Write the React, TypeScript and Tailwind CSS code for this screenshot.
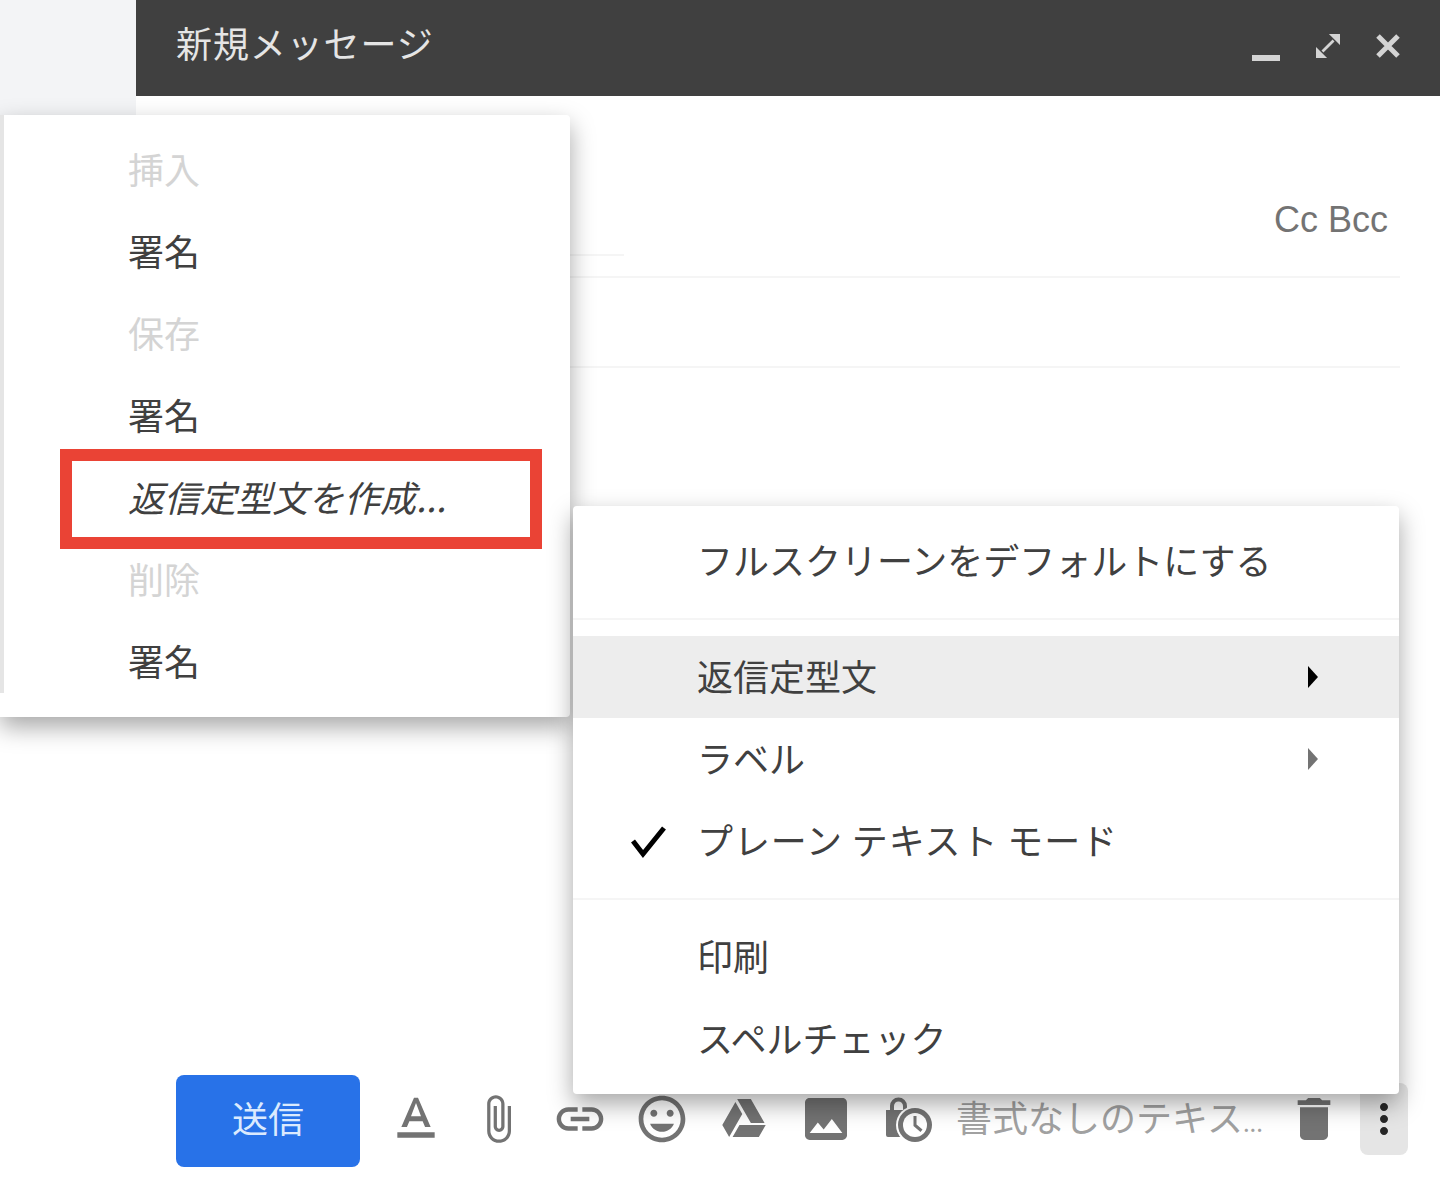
const toolIcons = [
  "M5 17v2h14v-2H5zm4.5-4.2h5l.9 2.2h2.1L12.75 4h-1.5L6.5 15h2.1l.9-2.2zM12 5.98L13.87 11h-3.74L12 5.98z",
  "M16.5 6v11.5c0 2.21-1.79 4-4 4s-4-1.79-4-4V5c0-1.38 1.12-2.5 2.5-2.5s2.5 1.12 2.5 2.5v10.5c0 .55-.45 1-1 1s-1-.45-1-1V6H10v9.5c0 1.38 1.12 2.5 2.5 2.5s2.5-1.12 2.5-2.5V5c0-2.21-1.79-4-4-4S7 2.79 7 5v12.5c0 3.04 2.46 5.5 5.5 5.5s5.5-2.46 5.5-5.5V6h-1.5z",
  "M3.9 12c0-1.71 1.39-3.1 3.1-3.1h4V7H7c-2.76 0-5 2.24-5 5s2.24 5 5 5h4v-1.9H7c-1.71 0-3.1-1.39-3.1-3.1zM8 13h8v-2H8v2zm9-6h-4v1.9h4c1.71 0 3.1 1.39 3.1 3.1s-1.39 3.1-3.1 3.1h-4V17h4c2.76 0 5-2.24 5-5s-2.24-5-5-5z",
  "M11.99 2C6.47 2 2 6.48 2 12s4.47 10 9.99 10C17.52 22 22 17.52 22 12S17.52 2 11.99 2zM12 20c-4.42 0-8-3.58-8-8s3.58-8 8-8 8 3.58 8 8-3.58 8-8 8zm3.5-9c.83 0 1.5-.67 1.5-1.5S16.33 8 15.5 8 14 8.67 14 9.5s.67 1.5 1.5 1.5zm-7 0c.83 0 1.5-.67 1.5-1.5S9.33 8 8.5 8 7 8.67 7 9.5 7.67 11 8.5 11zm3.5 6.5c2.33 0 4.31-1.46 5.11-3.5H6.89c.8 2.04 2.78 3.5 5.11 3.5z",
  "M7.71 3.5L1.15 15l3.43 6 6.55-11.5zM9.73 15L6.3 21h13.12l3.43-6zM22.28 14L15.42 2H8.58v.03L15.43 14z",
  "M21 19V5c0-1.1-.9-2-2-2H5c-1.1 0-2 .9-2 2v14c0 1.1.9 2 2 2h14c1.1 0 2-.9 2-2zM8.5 13.5l2.5 3.01L14.5 12l4.5 6H5l3.5-4.5z",
]

const menuShadow = "shadow-[0_10px_24px_rgba(0,0,0,0.35)]"

function ToolIcon({ d, size }: { d: string; size: string }) {
  return (
    <div className="flex h-20 w-20 items-center justify-center">
      <svg viewBox="0 0 24 24" className={`${size} fill-neutral-500`}>
        <path d={d} />
      </svg>
    </div>
  )
}

function LockClock() {
  return (
    <div className="flex h-20 w-20 items-center justify-center">
      <svg viewBox="0 0 48 48" className="size-12 fill-neutral-500">
        <path d="M2 15h4v-4a8.500 8.500 0 0 1 17 0v4h7v27H4a2 2 0 0 1-2-2z" />
        <path d="M10 15h9v-4a4.500 4.500 0 0 0-9 0z" fill="white" />
        <circle cx="31" cy="30" r="19" fill="white" />
        <circle cx="31" cy="30" r="17" />
        <circle cx="31" cy="30" r="12" fill="white" />
        <path d="M29.500 21h3v8.500l6 5-2 2.400-7-6z" />
      </svg>
    </div>
  )
}

function Arrow({ muted }: { muted?: boolean }) {
  return (
    <svg viewBox="0 0 12 24" className={`absolute right-20 h-6 w-3 ${muted ? "fill-neutral-500" : "fill-black"}`}>
      <path d="M1 1l10 11-10 11z" />
    </svg>
  )
}

function SideItem({ label, muted }: { label: string; muted?: boolean }) {
  return (
    <div className={`flex h-[82px] items-center pl-32 text-4xl ${muted ? "text-neutral-300" : "text-neutral-700"}`}>
      <span className="mb-1">{label}</span>
    </div>
  )
}

function MenuItem({
  label,
  active,
  wide,
  children,
}: {
  label: string
  active?: boolean
  wide?: boolean
  children?: React.ReactNode
}) {
  return (
    <div className={`relative flex h-[82px] items-center pl-31 text-4xl text-neutral-700 ${active ? "bg-neutral-200/70" : ""}`}>
      <span className={`mb-1 ${wide ? "tracking-wide" : ""}`}>{label}</span>
      {children}
    </div>
  )
}

export default function App() {
  return (
    <div className="relative flex h-[1199px] w-[1440px] overflow-hidden bg-white font-['Noto_Sans_CJK_JP',sans-serif]">
      <div className="w-[136px] shrink-0">
        <div className="h-30 bg-gray-100" />
      </div>

      <div className="flex flex-1 flex-col">
        <div className="flex h-24 items-center justify-between bg-neutral-700 px-10 pb-3 text-4xl tracking-wide text-neutral-200">
          <span>新規メッセージ</span>
          <div className="flex items-center gap-9 pt-2">
            <div className="mt-6 h-1.5 w-7 bg-neutral-300" />
            <svg viewBox="0 0 26 26" className="size-6 fill-neutral-300 stroke-neutral-300">
              <path d="M14 0h12v12zM0 26V14l12 12z" strokeWidth="0" />
              <path d="M7 19L19 7" strokeWidth="3" />
            </svg>
            <svg viewBox="0 0 24 24" className="size-6 stroke-neutral-300" strokeWidth="5">
              <path d="M2 2l20 20M22 2L2 22" />
            </svg>
          </div>
        </div>

        <div className="mx-10 flex justify-between border-b-2 border-neutral-100 pb-5">
          <div className="h-40 w-112 border-b-2 border-neutral-100" />
          <span className="mr-3 mt-28 font-['Liberation_Sans',sans-serif] text-4xl leading-6 text-neutral-500">
            Cc Bcc
          </span>
        </div>
        <div className="mx-10 h-[90px] border-b-2 border-neutral-100" />

        <div className="mt-auto flex items-center pb-8 pl-10 pr-8">
          <div className="rounded-lg bg-[#2872e8] px-14 pb-7 pt-5 text-4xl leading-11 text-blue-100">送信</div>
          <div className="mb-1 ml-4 flex items-center gap-0.5">
            <ToolIcon d={toolIcons[0]} size="size-16" />
            <ToolIcon d={toolIcons[1]} size="size-13" />
            <ToolIcon d={toolIcons[2]} size="size-14" />
            <ToolIcon d={toolIcons[3]} size="size-14" />
            <ToolIcon d={toolIcons[4]} size="size-12" />
            <ToolIcon d={toolIcons[5]} size="size-14" />
            <LockClock />
          </div>
          <span className="mb-2 ml-2 text-4xl text-neutral-400">
            書式なしのテキス<span className="text-2xl">...</span>
          </span>
          <div className="mb-1 ml-auto mr-1.5">
            <ToolIcon d="M6 19c0 1.1.9 2 2 2h8c1.100 0 2-.9 2-2V7H6v12zM19 4h-3.500l-1-1h-5l-1 1H5v2h14V4z" size="size-14" />
          </div>
          <div className="mb-1 flex h-18 w-12 items-center justify-center rounded-lg bg-neutral-200">
            <svg viewBox="0 0 24 24" className="size-14 fill-neutral-800">
              <path d="M12 8c1.100 0 2-.9 2-2s-.9-2-2-2-2 .9-2 2 .9 2 2 2zm0 2c-1.100 0-2 .9-2 2s.9 2 2 2 2-.9 2-2-.9-2-2-2zm0 6c-1.100 0-2 .9-2 2s.9 2 2 2 2-.9 2-2-.9-2-2-2z" />
            </svg>
          </div>
        </div>
      </div>

      {/* signature submenu */}
      <div className={`absolute left-0 top-[115px] w-[570px] rounded-r bg-white py-3.5 ${menuShadow}`}>
        <div className="absolute inset-y-0 left-0 mb-6 w-1 bg-neutral-200" />
        <SideItem label="挿入" muted />
        <SideItem label="署名" />
        <SideItem label="保存" muted />
        <SideItem label="署名" />
        <div className="relative">
          <div className="absolute -bottom-2.5 -top-2 left-15 right-7 border-12 border-[#ea4335]" />
          <div className="relative flex h-[82px] items-center pl-32 text-4xl italic text-neutral-700">
            <span className="mb-1">返信定型文を作成...</span>
          </div>
        </div>
        <SideItem label="削除" muted />
        <SideItem label="署名" />
      </div>

      {/* more options menu */}
      <div className={`absolute left-[573px] top-[506px] w-[826px] rounded bg-white py-3.5 ${menuShadow}`}>
        <MenuItem label="フルスクリーンをデフォルトにする" />
        <div className="my-4 border-t-2 border-neutral-100" />
        <MenuItem label="返信定型文" active>
          <Arrow />
        </MenuItem>
        <MenuItem label="ラベル">
          <Arrow muted />
        </MenuItem>
        <MenuItem label="プレーン テキスト モード" wide>
          <svg viewBox="0 0 40 40" className="absolute left-14 size-10 fill-none stroke-black" strokeWidth="5">
            <path d="M4 20l10 13L35 7" />
          </svg>
        </MenuItem>
        <div className="my-4 border-t-2 border-neutral-100" />
        <MenuItem label="印刷" />
        <MenuItem label="スペルチェック" />
      </div>
    </div>
  )
}
